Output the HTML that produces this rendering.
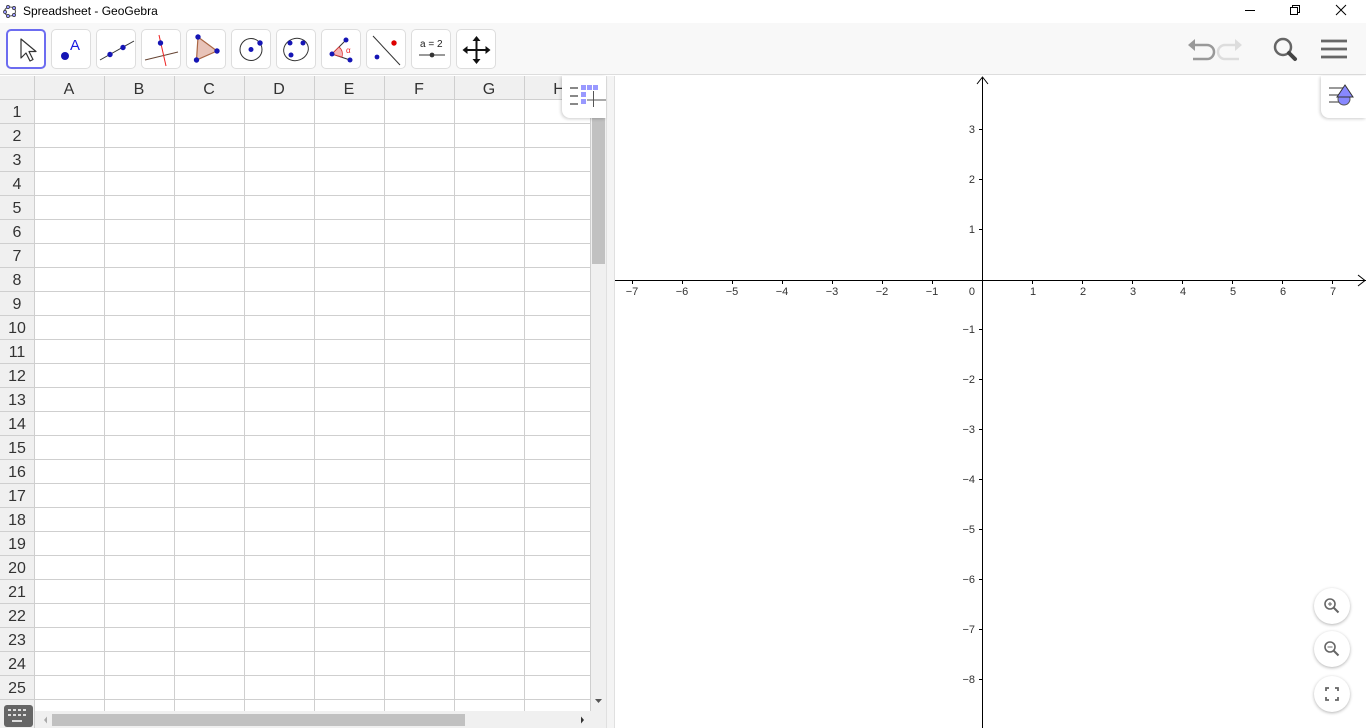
<!DOCTYPE html>
<html><head><meta charset="utf-8"><style>
*{margin:0;padding:0;box-sizing:border-box}
body{width:1366px;height:728px;overflow:hidden;background:#fff;font-family:"Liberation Sans",Arial,sans-serif;position:relative}
.title{position:absolute;left:0;top:0;width:1366px;height:23px;background:#fff;font-size:12px;color:#000}
.tb{position:absolute;left:0;top:23px;width:1366px;height:52px;background:#f8f8f8;border-bottom:1px solid #ddd}
.btn{position:absolute;top:6px;width:40px;height:40px;background:#fff;border:1px solid #ddd;border-radius:5px}
.btn svg{position:absolute;left:0;top:0}
</style></head><body>
<div class="title">
<svg style="position:absolute;left:3px;top:4px" width="14" height="14" viewBox="0 0 14 14"><ellipse cx="7" cy="7.5" rx="5.5" ry="4.5" fill="none" stroke="#555" stroke-width="1"/><g fill="#99f" stroke="#333" stroke-width=".7"><circle cx="2" cy="8" r="1.6"/><circle cx="5" cy="3" r="1.6"/><circle cx="11" cy="4" r="1.6"/><circle cx="11" cy="11" r="1.6"/><circle cx="5" cy="12" r="1.6"/></g></svg>
<span style="position:absolute;left:23px;top:4px">Spreadsheet - GeoGebra</span>
<svg style="position:absolute;left:1240px;top:0" width="126" height="23"><line x1="5" y1="10.5" x2="15" y2="10.5" stroke="#000"/><rect x="50.5" y="7.5" width="7" height="7" fill="none" stroke="#000"/><path d="M52.5 7.5V5.5h7v7h-2" fill="none" stroke="#000"/><path d="M96 5l10 10M106 5l-10 10" stroke="#000"/></svg>
</div>
<div class="tb">
<div class="btn" style="left:6px;border:2px solid #6c6cf0"><svg width="36" height="36"><path d="M13 8v19l5-5 4 8 3-1.5-4-8h7z" fill="#fff" stroke="#333" stroke-width="1.2" stroke-linejoin="round"/></svg></div>
<div class="btn" style="left:51px"><svg width="40" height="40"><circle cx="13" cy="26" r="4" fill="#1515b5"/><text x="18" y="20" font-size="15" fill="#1a1ae0" font-family="Liberation Sans">A</text></svg></div>
<div class="btn" style="left:96px"><svg width="40" height="40"><line x1="3" y1="30" x2="37" y2="11" stroke="#333"/><circle cx="13" cy="24.5" r="2.7" fill="#1515b5"/><circle cx="26" cy="17.5" r="2.7" fill="#1515b5"/></svg></div>
<div class="btn" style="left:141px"><svg width="40" height="40"><line x1="3" y1="30" x2="36" y2="22" stroke="#643"/><line x1="17" y1="5" x2="24" y2="36" stroke="#e22"/><circle cx="18.5" cy="13" r="2.7" fill="#1515b5"/></svg></div>
<div class="btn" style="left:186px"><svg width="40" height="40"><path d="M11 7L30 21 9.5 30z" fill="#e8c3b8" stroke="#a64" stroke-width="1.2"/><circle cx="11" cy="7" r="2.7" fill="#1515b5"/><circle cx="30" cy="21" r="2.7" fill="#1515b5"/><circle cx="9.5" cy="30" r="2.7" fill="#1515b5"/></svg></div>
<div class="btn" style="left:231px"><svg width="40" height="40"><circle cx="19" cy="19.5" r="11" fill="none" stroke="#333"/><circle cx="19" cy="19.5" r="2.5" fill="#1515b5"/><circle cx="28" cy="13" r="2.7" fill="#1515b5"/></svg></div>
<div class="btn" style="left:276px"><svg width="40" height="40"><ellipse cx="19" cy="19.5" rx="12.5" ry="11" transform="rotate(-20 19 19.5)" fill="none" stroke="#333"/><circle cx="13" cy="13" r="2.5" fill="#1515b5"/><circle cx="26" cy="13" r="2.5" fill="#1515b5"/><circle cx="14" cy="25" r="2.5" fill="#1515b5"/></svg></div>
<div class="btn" style="left:321px"><svg width="40" height="40"><path d="M10 24L24 10M10 24l18 6" stroke="#333" fill="none"/><path d="M10 24l7-7a9 9 0 0 1 3 10z" fill="#f5b5b5" stroke="#d33" stroke-width=".8"/><text x="24" y="23" font-size="8" fill="#e22">α</text><circle cx="10" cy="24" r="2.5" fill="#1515b5"/><circle cx="24" cy="10" r="2.5" fill="#1515b5"/><circle cx="28" cy="30" r="2.5" fill="#1515b5"/></svg></div>
<div class="btn" style="left:366px"><svg width="40" height="40"><line x1="6" y1="6" x2="33" y2="35" stroke="#333"/><circle cx="27" cy="13" r="2.7" fill="#d00"/><circle cx="10" cy="27" r="2.4" fill="#1515b5"/></svg></div>
<div class="btn" style="left:411px"><svg width="40" height="40"><text x="8" y="17" font-size="10" fill="#222" font-family="Liberation Sans">a = 2</text><line x1="7" y1="25" x2="33" y2="25" stroke="#333"/><circle cx="20" cy="25" r="2.4" fill="#333"/></svg></div>
<div class="btn" style="left:456px"><svg width="40" height="40"><path d="M19.5 9v22M8.5 20h22" stroke="#111" stroke-width="2"/><path d="M19.5 6l-4 5h8zM19.5 34l-4-5h8zM5.5 20l5-4v8zM33.5 20l-5-4v8z" fill="#111"/></svg></div>
<svg style="position:absolute;left:1185px;top:12px" width="180" height="32"><path d="M7 10h15a7 7 0 0 1 0 14H8" fill="none" stroke="#999" stroke-width="2.5"/><path d="M3 10l7-6v12z" fill="#999"/><path d="M53 10H40a7 7 0 0 0 0 14h14" fill="none" stroke="#ddd" stroke-width="2.5"/><path d="M57 10l-7-6v12z" fill="#ddd"/><circle cx="98" cy="12" r="8" fill="none" stroke="#666" stroke-width="2.5"/><path d="M104 18l6 6" stroke="#444" stroke-width="4" stroke-linecap="round"/><path d="M136 6h26M136 14h26M136 22h26" stroke="#666" stroke-width="2.7"/></svg>
</div>

<svg style="position:absolute;left:0;top:76px" width="615" height="652">
<rect x="0" y="0" width="615" height="652" fill="#fff"/>
<rect x="0" y="0" width="591" height="23" fill="#f0f0f0"/>
<rect x="0" y="0" width="34" height="652" fill="#f0f0f0"/>
<g stroke="#cfcfcf" stroke-width="1">
<path d="M34.5 0V652M104.5 0V652M174.5 0V652M244.5 0V652M314.5 0V652M384.5 0V652M454.5 0V652M524.5 0V652M590.5 0V652"/>
<path d="M0 23.5H591M0 47.5H591M0 71.5H591M0 95.5H591M0 119.5H591M0 143.5H591M0 167.5H591M0 191.5H591M0 215.5H591M0 239.5H591M0 263.5H591M0 287.5H591M0 311.5H591M0 335.5H591M0 359.5H591M0 383.5H591M0 407.5H591M0 431.5H591M0 455.5H591M0 479.5H591M0 503.5H591M0 527.5H591M0 551.5H591M0 575.5H591M0 599.5H591M0 623.5H591"/>
</g>
<g font-size="16" fill="#333" text-anchor="middle" font-family="Liberation Sans">
<text x="69" y="18">A</text><text x="139" y="18">B</text><text x="209" y="18">C</text><text x="279" y="18">D</text><text x="349" y="18">E</text><text x="419" y="18">F</text><text x="489" y="18">G</text><text x="559" y="18">H</text>
<text x="17" y="41">1</text><text x="17" y="65">2</text><text x="17" y="89">3</text><text x="17" y="113">4</text><text x="17" y="137">5</text><text x="17" y="161">6</text><text x="17" y="185">7</text><text x="17" y="209">8</text><text x="17" y="233">9</text><text x="17" y="257">10</text><text x="17" y="281">11</text><text x="17" y="305">12</text><text x="17" y="329">13</text><text x="17" y="353">14</text><text x="17" y="377">15</text><text x="17" y="401">16</text><text x="17" y="425">17</text><text x="17" y="449">18</text><text x="17" y="473">19</text><text x="17" y="497">20</text><text x="17" y="521">21</text><text x="17" y="545">22</text><text x="17" y="569">23</text><text x="17" y="593">24</text><text x="17" y="617">25</text><text x="17" y="641">26</text>
</g>
<rect x="591" y="0" width="15" height="652" fill="#f0f0f0"/>
<rect x="592" y="42" width="13" height="146" fill="#c1c1c1"/>
<path d="M595 623h7l-3.5 4z" fill="#555"/>
<rect x="35" y="635" width="556" height="17" fill="#f0f0f0"/>
<rect x="52" y="638" width="413" height="12" fill="#c1c1c1"/>
<path d="M44 644l3-3.5v7z" fill="#aaa"/><path d="M584 644l-3-3.5v7z" fill="#333"/>
<rect x="4" y="629" width="29" height="22" rx="3" fill="#666"/>
<g fill="#ddd"><rect x="8" y="633" width="3" height="2"/><rect x="13" y="633" width="3" height="2"/><rect x="18" y="633" width="3" height="2"/><rect x="23" y="633" width="3" height="2"/><rect x="8" y="638" width="3" height="2"/><rect x="13" y="638" width="3" height="2"/><rect x="18" y="638" width="3" height="2"/><rect x="23" y="638" width="3" height="2"/><rect x="12" y="644" width="10" height="2"/></g>
<rect x="606" y="0" width="9" height="652" fill="#f4f4f4"/>
<path d="M606.5 0V652M614.5 0V652" stroke="#e0e0e0"/>
</svg>
<div style="position:absolute;left:562px;top:76px;width:44px;height:42px;background:#fff;border-radius:0 0 0 8px;box-shadow:-1px 1px 3px rgba(0,0,0,.2);overflow:hidden">
<svg width="44" height="42"><g fill="#888"><rect x="8" y="11" width="8" height="2"/><rect x="8" y="19" width="8" height="2"/><rect x="8" y="27" width="8" height="2"/></g><g fill="#99f"><rect x="19" y="9" width="5" height="5"/><rect x="25" y="9" width="5" height="5"/><rect x="31" y="9" width="5" height="5"/><rect x="19" y="16" width="5" height="5"/><rect x="19" y="23" width="5" height="5"/></g><path d="M25 24h19M31.5 15v16" stroke="#555" stroke-width="1"/></svg>
</div>

<svg style="position:absolute;left:615px;top:76px" width="751" height="652" font-family="Liberation Sans" font-size="11" fill="#333">
<line x1="0" y1="204.5" x2="751" y2="204.5" stroke="#000"/>
<path d="M743 199l7 5.5-7 5.5" fill="none" stroke="#000"/>
<line x1="367.5" y1="2" x2="367.5" y2="652" stroke="#000"/>
<path d="M362 8l5.5-7 5.5 7" fill="none" stroke="#000"/>
<g stroke="#000">
<path d="M17.5 204v4M67.5 204v4M117.5 204v4M167.5 204v4M217.5 204v4M267.5 204v4M317.5 204v4M417.5 204v4M467.5 204v4M517.5 204v4M567.5 204v4M617.5 204v4M667.5 204v4M717.5 204v4"/>
<path d="M364 53.5h4M364 103.5h4M364 153.5h4M364 253.5h4M364 303.5h4M364 353.5h4M364 403.5h4M364 453.5h4M364 503.5h4M364 553.5h4M364 603.5h4"/>
</g>
<g text-anchor="middle"><text x="17" y="219">−7</text><text x="67" y="219">−6</text><text x="117" y="219">−5</text><text x="167" y="219">−4</text><text x="217" y="219">−3</text><text x="267" y="219">−2</text><text x="317" y="219">−1</text><text x="418" y="219">1</text><text x="468" y="219">2</text><text x="518" y="219">3</text><text x="568" y="219">4</text><text x="618" y="219">5</text><text x="668" y="219">6</text><text x="718" y="219">7</text></g>
<g text-anchor="end"><text x="360" y="219">0</text><text x="360" y="57">3</text><text x="360" y="107">2</text><text x="360" y="157">1</text><text x="360" y="257">−1</text><text x="360" y="307">−2</text><text x="360" y="357">−3</text><text x="360" y="407">−4</text><text x="360" y="457">−5</text><text x="360" y="507">−6</text><text x="360" y="557">−7</text><text x="360" y="607">−8</text></g>
</svg>
<div style="position:absolute;left:1321px;top:76px;width:45px;height:42px;background:#fff;border-radius:0 0 0 8px;box-shadow:-1px 1px 3px rgba(0,0,0,.2)">
<svg width="45" height="42"><g fill="#999"><rect x="8" y="11" width="14" height="2"/><rect x="8" y="18" width="10" height="2"/><rect x="8" y="25" width="10" height="2"/></g><circle cx="23" cy="23" r="6" fill="#88f" stroke="#555"/><path d="M24 8l8 12H16z" fill="#88f" stroke="#333" transform="translate(0,1)"/></svg>
</div>
<div style="position:absolute;left:1314px;top:588px;width:36px;height:36px;border-radius:50%;background:#fff;box-shadow:0 1px 3px rgba(0,0,0,.3)"><svg width="36" height="36"><circle cx="16" cy="16" r="5" fill="none" stroke="#666" stroke-width="1.6"/><path d="M14 16h4M16 14v4" stroke="#666"/><path d="M19.5 19.5l5 5" stroke="#666" stroke-width="2"/></svg></div>
<div style="position:absolute;left:1314px;top:631px;width:36px;height:36px;border-radius:50%;background:#fff;box-shadow:0 1px 3px rgba(0,0,0,.3)"><svg width="36" height="36"><circle cx="16" cy="16" r="5" fill="none" stroke="#666" stroke-width="1.6"/><path d="M13.5 16h5" stroke="#666"/><path d="M19.5 19.5l5 5" stroke="#666" stroke-width="2"/></svg></div>
<div style="position:absolute;left:1314px;top:676px;width:36px;height:36px;border-radius:50%;background:#fff;box-shadow:0 1px 3px rgba(0,0,0,.3)"><svg width="36" height="36"><path d="M12 15v-3h3M21 12h3v3M24 21v3h-3M15 24h-3v-3" fill="none" stroke="#666" stroke-width="1.8"/></svg></div>
</body></html>
